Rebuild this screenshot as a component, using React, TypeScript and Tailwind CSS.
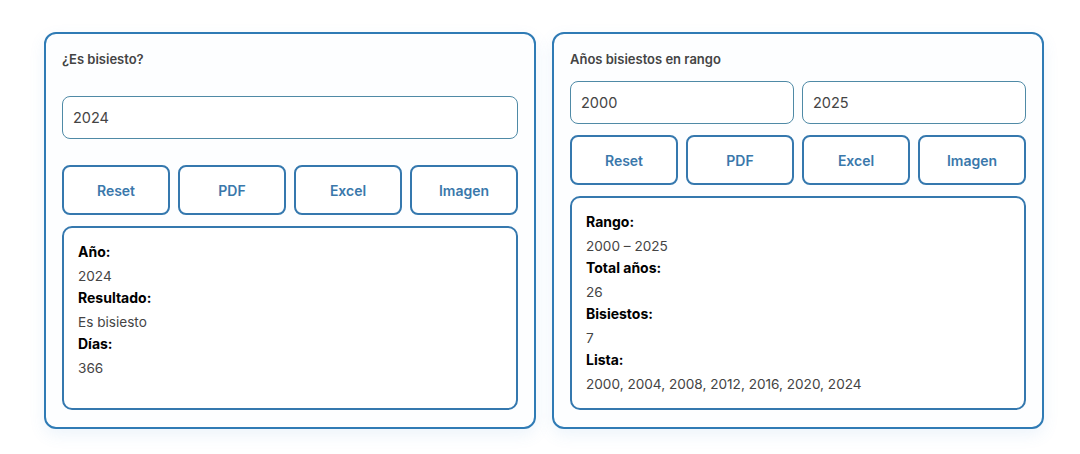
import React from 'react';

const font = { fontFamily: 'Inter, "Noto Sans", sans-serif' };

function ActionButtons() {
  const labels = ['Reset', 'PDF', 'Excel', 'Imagen'];
  return (
    <div className="grid grid-cols-4 gap-2">
      {labels.map((label) => (
        <button
          key={label}
          className="h-[50px] rounded-lg border-2 border-[#3578ae] bg-white text-[14px] font-semibold text-[#3a78ab]"
        >
          {label}
        </button>
      ))}
    </div>
  );
}

function Field({ label, value }: { label: string; value: string }) {
  return (
    <>
      <div className="text-[14px] font-bold leading-[21px] text-black">{label}</div>
      <div className="mt-1 text-[13.6px] leading-[21px] text-[#444]">{value}</div>
    </>
  );
}

function YearInput({ value }: { value: string }) {
  return (
    <input
      defaultValue={value}
      className="h-[43px] w-full rounded-lg border border-[#4f8aa6] bg-white px-[10px] text-[14.5px] text-[#444] outline-none"
    />
  );
}

export default function App() {
  return (
    <div className="min-h-screen bg-white" style={font}>
      <div className="ml-[44px] grid w-[1000px] grid-cols-2 gap-4 pt-8">
        {/* single year check */}
        <section className="flex flex-col rounded-xl border-2 border-[#2f7bb5] bg-[#fdfeff] px-4 pt-4 pb-[17px] shadow-[0_6px_16px_rgba(80,150,220,0.10)]">
          <h3 className="text-[13px] font-semibold leading-[18px] text-[#444]">¿Es bisiesto?</h3>
          <div className="mt-[28px]">
            <YearInput value="2024" />
          </div>
          <div className="mt-[26px]">
            <ActionButtons />
          </div>
          <div className="mt-[11px] flex-1 rounded-[10px] border-2 border-[#3578ae] bg-white px-[14px] pt-[13px]">
            <Field label="Año:" value="2024" />
            <Field label="Resultado:" value="Es bisiesto" />
            <Field label="Días:" value="366" />
          </div>
        </section>

        {/* leap years in a range */}
        <section className="flex flex-col rounded-xl border-2 border-[#2f7bb5] bg-[#fdfeff] px-4 pt-4 pb-[17px] shadow-[0_6px_16px_rgba(80,150,220,0.10)]">
          <h3 className="text-[13px] font-semibold leading-[18px] text-[#444]">Años bisiestos en rango</h3>
          <div className="mt-[13px] grid grid-cols-2 gap-2">
            <YearInput value="2000" />
            <YearInput value="2025" />
          </div>
          <div className="mt-[11px]">
            <ActionButtons />
          </div>
          <div className="mt-[11px] h-[214px] rounded-[10px] border-2 border-[#3578ae] bg-white px-[14px] pt-[13px]">
            <Field label="Rango:" value="2000 – 2025" />
            <Field label="Total años:" value="26" />
            <Field label="Bisiestos:" value="7" />
            <Field label="Lista:" value="2000, 2004, 2008, 2012, 2016, 2020, 2024" />
          </div>
        </section>
      </div>
    </div>
  );
}
